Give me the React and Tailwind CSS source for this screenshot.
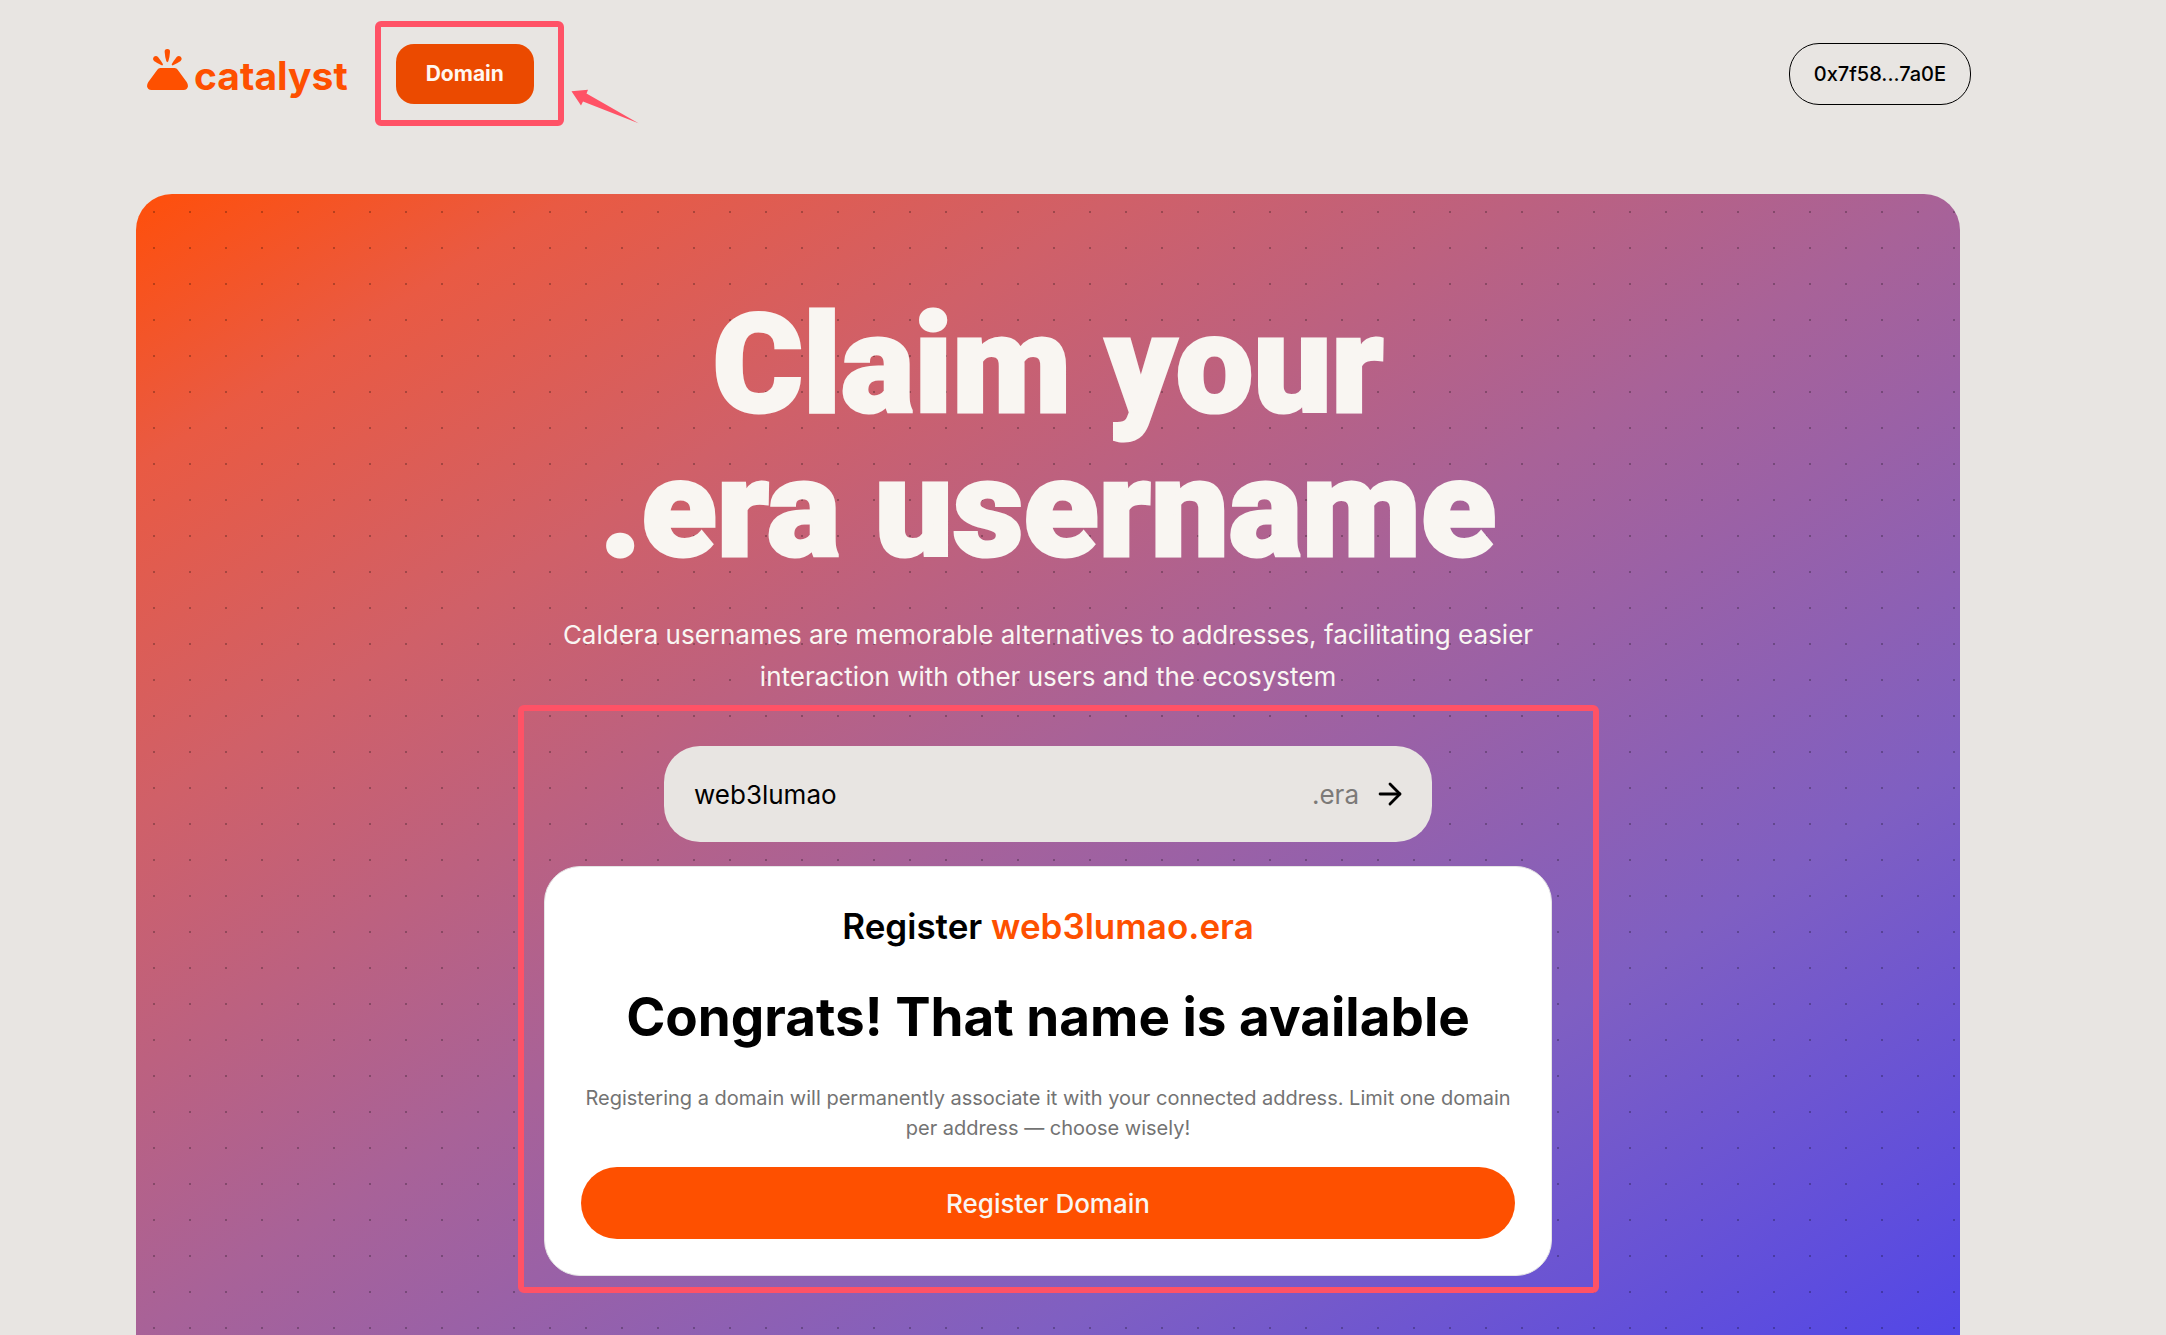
import { useState } from "react";
import { ArrowRight } from "lucide-react";

function Logo() {
  return (
    <a href="#" className="flex items-baseline gap-1.5 pb-1 text-[#fe5000]">
      <svg width="41" height="41" viewBox="0 0 123 123" fill="currentColor" aria-hidden="true">
        <path d="M40 57H83Q89 57 92 62L119 99Q123 105 123 112Q121 123 110 123H13Q2 123 0 112Q0 105 4 99L31 62Q34 57 40 57Z" />
        <path d="M61 0Q70 0 69 9Q68 25 64 37Q61 42 58 37Q54 25 53 9Q52 0 61 0Z" />
        <path d="M20 24Q27 18 33 24Q42 35 48 46Q48 50 44 49Q31 43 21 36Q15 30 20 24Z" />
        <path d="M102 24Q95 18 89 24Q80 35 74 46Q74 50 78 49Q91 43 101 36Q107 30 102 24Z" />
      </svg>
      <span className="text-[39px] leading-10 font-bold">catalyst</span>
    </a>
  );
}

function PointerArrow() {
  return (
    <svg
      className="pointer-events-none absolute top-[45px] left-[175px]"
      width="68"
      height="35"
      viewBox="0 0 68 35"
      fill="#ff5266"
      aria-hidden="true"
    >
      <path d="M0.5 2.3L17 0.7L15.5 4.5L67.5 34.2L12 12.5L10 16.5Z" />
    </svg>
  );
}

export default function App() {
  const [name, setName] = useState("web3lumao");

  return (
    <div className="flex min-h-screen flex-col bg-[#e8e5e2] font-['Inter',sans-serif] text-black">
      <header className="flex items-center justify-between pt-[43px] pr-[195px] pb-[89px] pl-[147px]">
        <div className="flex items-center gap-12">
          <Logo />
          <nav className="relative">
            <button className="h-[60px] rounded-[18px] bg-[#eb4a00] px-[30px] text-[21px] font-bold text-[#fff7f0]">
              Domain
            </button>
            <div className="pointer-events-none absolute -top-[23px] -right-[30px] -bottom-[22px] -left-[21px] rounded-md border-6 border-[#ff5266]" />
            <PointerArrow />
          </nav>
        </div>
        <button className="h-[62px] rounded-[30px] border border-black px-6 text-xl font-medium">
          0x7f58...7a0E
        </button>
      </header>

      <main className="mr-[206px] ml-[136px] flex flex-1 flex-col items-center rounded-t-[36px] bg-[radial-gradient(circle_at_center,rgba(0,0,0,0.25)_1px,transparent_1px),linear-gradient(to_bottom_right,#ff4f0a,#e95a43_12%,#d06068_27%,#a86298_50%,#7f5fc2_75%,#5247e7)] bg-[length:36px_36px,100%_100%] pt-[99px] pb-[58px] text-center">
        <h1 className="font-['Roboto',sans-serif] text-[138px] leading-[144px] font-black text-[#f9f6f2] [-webkit-text-stroke:3px_#f9f6f2]">
          Claim your
          <br />
          .era username
        </h1>
        <p className="mt-[33px] max-w-[1008px] text-[26px] leading-[42px] text-[#f9f6f2]">
          Caldera usernames are memorable alternatives to addresses, facilitating easier interaction with
          other users and the ecosystem
        </p>

        <div className="relative mt-12 flex w-full max-w-[1008px] flex-col items-center gap-6">
          <form
            onSubmit={(e) => e.preventDefault()}
            className="flex h-24 w-full max-w-3xl items-center rounded-[36px] bg-[#e8e5e2] pr-[25px] pl-[30px] text-[26px]"
          >
            <input
              aria-label="Username"
              value={name}
              onChange={(e) => setName(e.target.value)}
              className="min-w-0 flex-1 bg-transparent outline-none"
            />
            <span className="mr-3.5 text-[#7c7a78]">.era</span>
            <button type="submit" aria-label="Search">
              <ArrowRight size={34} />
            </button>
          </form>

          <section className="w-full rounded-[36px] border border-[#e5e5e5] bg-white px-9 pt-8 pb-9">
            <h2 className="text-[35px] leading-[54px] font-semibold">
              Register <span className="text-[#fe5000]">{name}.era</span>
            </h2>
            <p className="mt-[37px] text-[53px] leading-[54px] font-bold">Congrats! That name is available</p>
            <p className="mt-[39px] text-xl leading-[30px] text-[#737373]">
              Registering a domain will permanently associate it with your connected address. Limit one
              domain per address — choose wisely!
            </p>
            <button className="mt-6 h-[72px] w-full rounded-[36px] bg-[#fe5000] text-[26px] font-medium text-[#f9f6f2]">
              Register Domain
            </button>
          </section>

          <div className="pointer-events-none absolute -top-[41px] -right-[47px] -bottom-[17px] -left-[26px] rounded-md border-6 border-[#ff5266]" />
        </div>
      </main>
    </div>
  );
}
